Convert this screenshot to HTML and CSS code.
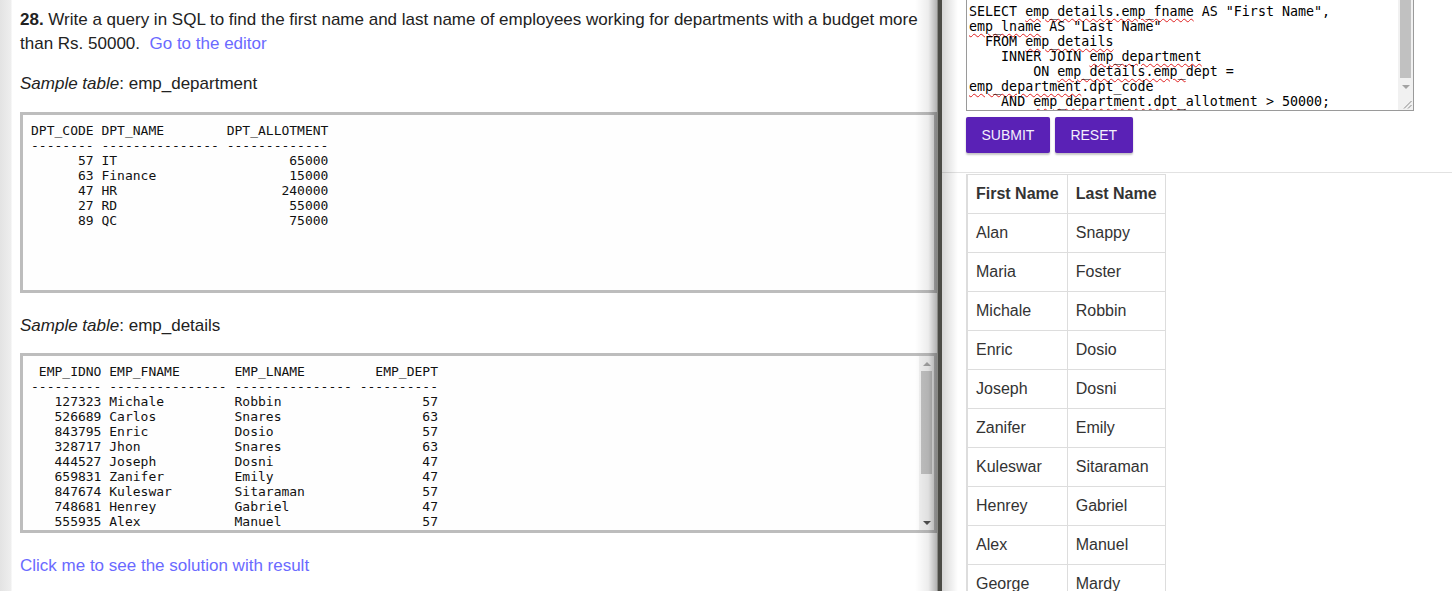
FILE: index.html
```
<!DOCTYPE html>
<html lang="en">
<head>
<meta charset="utf-8">
<title>SQL Exercise 28</title>
<link rel="stylesheet" href="styles.css">
</head>
<body>
<div class="split">
  <section class="left">
    <p class="question"><b>28.</b> Write a query in SQL to find the first name and last name of employees working for departments with a budget more than Rs. 50000. &nbsp;<a class="link" href="#editor">Go to the editor</a></p>
    <p class="caption"><i>Sample table</i>: emp_department</p>
    <div class="sample sample-dept"><pre class="sample-text">DPT_CODE DPT_NAME        DPT_ALLOTMENT
-------- --------------- -------------
      57 IT                      65000
      63 Finance                 15000
      47 HR                     240000
      27 RD                      55000
      89 QC                      75000</pre></div>
    <p class="caption caption-2"><i>Sample table</i>: emp_details</p>
    <div class="sample sample-emp">
      <div class="viewport"><pre class="sample-text"> EMP_IDNO EMP_FNAME       EMP_LNAME         EMP_DEPT
--------- --------------- --------------- ----------
   127323 Michale         Robbin                  57
   526689 Carlos          Snares                  63
   843795 Enric           Dosio                   57
   328717 Jhon            Snares                  63
   444527 Joseph          Dosni                   47
   659831 Zanifer         Emily                   47
   847674 Kuleswar        Sitaraman               57
   748681 Henrey          Gabriel                 47
   555935 Alex            Manuel                  57
   539569 George          Mardy                   27
   733843 Mario           Saule                   63
   631548 Alan            Snappy                  27
   839139 Maria           Foster                  57</pre></div>
      <div class="vscroll">
        <div class="sbtn"><svg width="8" height="4" viewBox="0 0 8 4"><polygon points="0,4 8,4 4,0" fill="#a3a3a3"/></svg></div>
        <div class="track"><div class="thumb thumb-emp"></div></div>
        <div class="sbtn"><svg width="8" height="4" viewBox="0 0 8 4"><polygon points="0,0 8,0 4,4" fill="#505050"/></svg></div>
      </div>
    </div>
    <p class="solution"><a class="link" href="#solution">Click me to see the solution with result</a></p>
  </section>
  <div class="gutter"></div>
  <section class="right" id="editor">
    <div class="editor-area">
      <div class="editor">
        <div class="editor-view"><pre class="editor-text">SELECT <span class="sp">emp_details.emp_fname</span> AS "First Name",
<span class="sp">emp_lname</span> AS "Last Name"
  FROM <span class="sp">emp_details</span>
    INNER JOIN <span class="sp">emp_department</span>
        ON <span class="sp">emp_details.emp_</span>dept =
<span class="sp">emp_department</span>.dpt_code
    AND <span class="sp">emp_department.dpt_</span>allotment &gt; 50000;</pre></div>
        <div class="vscroll">
          <div class="sbtn"><svg width="8" height="4" viewBox="0 0 8 4"><polygon points="0,4 8,4 4,0" fill="#505050"/></svg></div>
          <div class="track"><div class="thumb thumb-editor"></div></div>
          <div class="sbtn"><svg width="8" height="4" viewBox="0 0 8 4"><polygon points="0,0 8,0 4,4" fill="#a3a3a3"/></svg></div>
          <div class="corner"><svg width="9" height="9" viewBox="0 0 9 9"><path d="M1 8.5 L8.5 1 M5 8.5 L8.5 5" stroke="#8a8a8a" stroke-width="1" fill="none"/></svg></div>
        </div>
      </div>
      <div class="actions">
        <button class="btn" type="button">SUBMIT</button>
        <button class="btn" type="button">RESET</button>
      </div>
    </div>
    <hr class="rule">
    <div class="result">
      <table class="grid">
        <thead>
          <tr><th>First Name</th><th>Last Name</th></tr>
        </thead>
        <tbody>
          <tr><td>Alan</td><td>Snappy</td></tr>
          <tr><td>Maria</td><td>Foster</td></tr>
          <tr><td>Michale</td><td>Robbin</td></tr>
          <tr><td>Enric</td><td>Dosio</td></tr>
          <tr><td>Joseph</td><td>Dosni</td></tr>
          <tr><td>Zanifer</td><td>Emily</td></tr>
          <tr><td>Kuleswar</td><td>Sitaraman</td></tr>
          <tr><td>Henrey</td><td>Gabriel</td></tr>
          <tr><td>Alex</td><td>Manuel</td></tr>
          <tr><td>George</td><td>Mardy</td></tr>
        </tbody>
      </table>
    </div>
  </section>
</div>
</body>
</html>
```
FILE: styles.css
```
html, body {
  margin: 0;
  padding: 0;
  background: #fff;
}

body {
  font-family: "Liberation Sans", Arial, sans-serif;
  color: #222;
  overflow: hidden;
}

.split {
  display: flex;
  height: 591px;
  overflow: hidden;
}

/* ---------- drawn classic scrollbar ---------- */
.vscroll {
  flex: none;
  width: 15px;
  display: flex;
  flex-direction: column;
  background: #f1f1f1;
}

.sbtn {
  flex: none;
  height: 15px;
  display: flex;
  align-items: center;
  justify-content: center;
}

.sbtn svg {
  display: block;
}

.track {
  flex: 1;
  display: flex;
  flex-direction: column;
  padding: 0 2px;
}

.thumb {
  flex: none;
  background: #c1c1c1;
}

.thumb-emp {
  height: 103px;
}

.thumb-editor {
  height: 82px;
}

.corner {
  flex: none;
  height: 15px;
  display: flex;
  align-items: flex-end;
  justify-content: flex-end;
  padding: 0 1px 1px 0;
  background: #f1f1f1;
}

.corner svg {
  display: block;
}

/* ---------- left pane ---------- */
.left {
  flex: none;
  width: 937px;
  box-sizing: border-box;
  padding: 8px 0 0 20px;
  position: relative;
  overflow: hidden;
  background: linear-gradient(to right, #e3e3e3 0, #eeeeee 11px, #ffffff 12px);
  font-size: 17px;
  line-height: 24px;
}

.left::after {
  content: "";
  position: absolute;
  top: 0;
  right: 0;
  bottom: 0;
  width: 22px;
  background: linear-gradient(to right, rgba(0, 0, 0, 0), rgba(0, 0, 0, 0.07) 60%, rgba(0, 0, 0, 0.3));
  pointer-events: none;
}

.question {
  margin: 0 0 16px;
}

.question b {
  font-weight: bold;
}

.link {
  color: #6a6aff;
  text-decoration: none;
}

.caption {
  margin: 0 0 16px;
}

.caption-2 {
  margin-bottom: 15px;
}

.sample {
  box-sizing: border-box;
  width: 100%;
  border: 3px solid #bdbdbd;
  background: #fefefe;
  margin-bottom: 21px;
}

.sample-dept {
  height: 181px;
  overflow: hidden;
}

.sample-emp {
  height: 180px;
  display: flex;
}

.viewport {
  flex: 1;
  min-width: 0;
  overflow: hidden;
}

.sample-text {
  margin: 0;
  padding: 8px 8px;
  font-family: "DejaVu Sans Mono", monospace;
  font-size: 13px;
  line-height: 15px;
  color: #111;
}

.solution {
  margin: 0;
}

/* ---------- gutter ---------- */
.gutter {
  flex: none;
  width: 5px;
  box-sizing: border-box;
  border-left: 1px solid #8a8a86;
  background: #4b4b46;
}

/* ---------- right pane ---------- */
.right {
  flex: 1;
  position: relative;
  overflow: hidden;
}

.right::before {
  content: "";
  position: absolute;
  top: 0;
  left: 0;
  bottom: 0;
  width: 16px;
  background: linear-gradient(to right, rgba(0, 0, 0, 0.16), rgba(0, 0, 0, 0));
  pointer-events: none;
  z-index: 2;
}

.editor-area {
  padding-left: 24px;
}

.editor {
  box-sizing: border-box;
  width: 448px;
  height: 131px;
  margin-top: -20px;
  border: 1px solid #9a9a9a;
  background: #fff;
  display: flex;
}

.editor-view {
  flex: 1;
  min-width: 0;
  overflow: hidden;
  padding: 0 2px 1px;
  display: flex;
  flex-direction: column-reverse;
}

.editor-text {
  flex: none;
  margin: 0;
  font-family: "DejaVu Sans Mono", monospace;
  font-size: 13.333px;
  line-height: 15px;
  color: #000;
}

.sp {
  text-decoration: underline wavy #e02020;
  text-decoration-thickness: 1px;
  text-underline-offset: 2px;
}

.actions {
  display: flex;
  gap: 5px;
  margin-top: 6px;
}

.btn {
  height: 36px;
  padding: 0 15.5px;
  border: none;
  border-radius: 2px;
  background: #5a21b6;
  color: #f4f0fc;
  font-family: "Liberation Sans", Arial, sans-serif;
  font-size: 14px;
  box-shadow: 0 2px 2px rgba(0, 0, 0, 0.22), 0 0 1px rgba(0, 0, 0, 0.15);
  cursor: pointer;
}

.rule {
  margin: 19px 0 0;
  border: none;
  border-top: 1px solid #e2e2e2;
  height: 0;
}

.result {
  padding-left: 24px;
  padding-top: 1px;
}

.grid {
  border-collapse: collapse;
  border-top: 1px solid #dddddd;
  border-left: 2px solid #dddddd;
  font-size: 16px;
  line-height: 22px;
  color: #333;
}

.grid th,
.grid td {
  border: 1px solid #dddddd;
  padding: 8px;
  text-align: left;
}

.grid th {
  font-weight: bold;
}
```
